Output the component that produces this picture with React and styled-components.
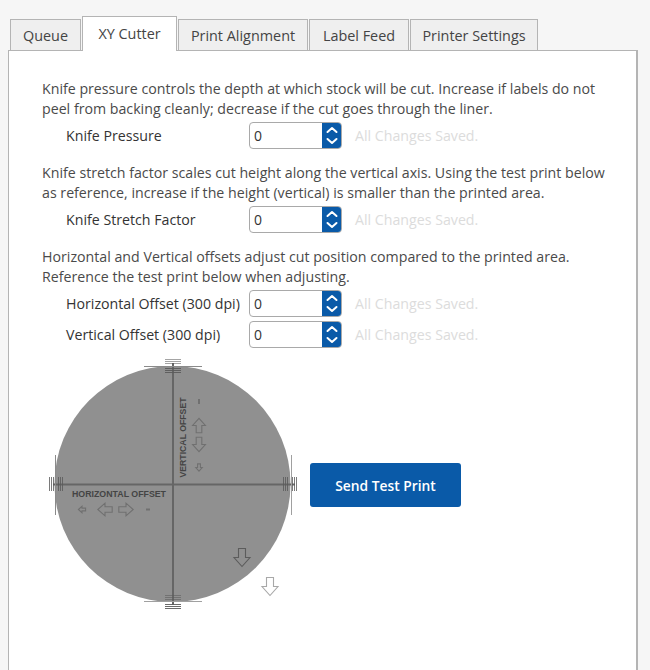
import React from "react";
import styled, { createGlobalStyle } from "styled-components";

const GlobalStyle = createGlobalStyle`
  html, body {
    margin: 0;
    height: 100%;
    background: #f6f6f6;
    overflow: hidden;
  }
  body {
    font-family: "Open Sans", "Noto Sans", sans-serif;
    color: #333;
  }
`;

const TABS = [
  { label: "Queue", width: 71 },
  { label: "XY Cutter", width: 95, active: true },
  { label: "Print Alignment", width: 130 },
  { label: "Label Feed", width: 100 },
  { label: "Printer Settings", width: 128 },
];

const Arrow = ({ x, y, rotate = 0, scale = 1, color = "#707070" }) => (
  <path
    d="M-3.5 -9 H3.5 V0 H8 L0 9 L-8 0 H-3.5 Z"
    transform={`translate(${x} ${y}) rotate(${rotate}) scale(${scale})`}
    fill="none"
    stroke={color}
    strokeWidth={1.1 / scale}
  />
);

// registration marks where the cross lines leave the circle
const Ticks = ({ x, y, vertical }) => {
  const offsets = [-7, -5, -3, 2, 4, 6];
  return offsets.map((o) =>
    vertical ? (
      <line key={o} x1={x - 8} x2={x + 8} y1={y + o + 0.5} y2={y + o + 0.5} stroke="#5a5a5a" strokeWidth="1" opacity={o < 0 ? 0.55 : 0.9} />
    ) : (
      <line key={o} x1={x + o + 0.5} x2={x + o + 0.5} y1={y - 7} y2={y + 7} stroke="#5a5a5a" strokeWidth="1" opacity="0.8" />
    )
  );
};

// test print preview, coordinates relative to the 260x260 drawing
const TestPrint = () => (
  <PrintSvg width="260" height="260" viewBox="0 0 260 260">
    <circle cx="127.5" cy="129" r="118" fill="#909090" />
    <line x1="128" x2="128" y1="8" y2="250" stroke="#666" strokeWidth="2" />
    <line x1="8" x2="250" y1="129.5" y2="129.5" stroke="#666" strokeWidth="2" />
    <line x1="99" x2="157" y1="11.5" y2="11.5" stroke="#8a8a8a" />
    <line x1="99" x2="157" y1="246.5" y2="246.5" stroke="#a0a0a0" />
    <line x1="10.5" x2="10.5" y1="100" y2="160" stroke="#8a8a8a" />
    <line x1="246.5" x2="246.5" y1="100" y2="160" stroke="#a0a0a0" />
    <Ticks x={128} y={11} vertical />
    <Ticks x={128} y={247} vertical />
    <Ticks x={11} y={129} />
    <Ticks x={245} y={129} />
    <PrintLabel x="27" y="141.5" textLength="94" lengthAdjust="spacingAndGlyphs">
      HORIZONTAL OFFSET
    </PrintLabel>
    <PrintLabel
      transform="translate(140.5 122.5) rotate(-90)"
      textLength="80"
      lengthAdjust="spacingAndGlyphs"
    >
      VERTICAL OFFSET
    </PrintLabel>
    <Arrow x={37} y={154.5} rotate={90} scale={0.4} />
    <Arrow x={60} y={154.5} rotate={90} scale={0.8} />
    <Arrow x={81} y={154.5} rotate={-90} scale={0.8} />
    <line x1="101" x2="105" y1="154.5" y2="154.5" stroke="#707070" strokeWidth="2" />
    <line x1="154" x2="154" y1="44" y2="49" stroke="#707070" strokeWidth="2" />
    <Arrow x={154} y={70.5} rotate={180} scale={0.8} />
    <Arrow x={154} y={89.5} scale={0.8} />
    <Arrow x={154} y={112.5} scale={0.4} />
    <Arrow x={197} y={202.5} color="#5c5c5c" />
    <Arrow x={225} y={231.5} color="#a8a8a8" />
  </PrintSvg>
);

const Spinner = () => (
  <SpinBox>
    <SpinValue>0</SpinValue>
    <SpinButtons>
      <svg width="20" height="27" viewBox="0 0 20 27" fill="none" stroke="#fff" strokeWidth="2" strokeLinecap="round" strokeLinejoin="round">
        <path d="M5.5 10 L10 6 L14.5 10" />
        <path d="M5.5 17 L10 21 L14.5 17" />
      </svg>
    </SpinButtons>
  </SpinBox>
);

const Setting = ({ label, gap = 14 }) => (
  <Row $gap={gap}>
    <RowLabel>{label}</RowLabel>
    <Spinner />
    <Saved>All Changes Saved.</Saved>
  </Row>
);

const App = () => {
  return (
    <Page>
      <GlobalStyle />
      <TabBar>
        {TABS.map((t) => (
          <Tab key={t.label} $active={t.active} $width={t.width}>
            {t.label}
          </Tab>
        ))}
      </TabBar>
      <Panel>
        <Help>
          Knife pressure controls the depth at which stock will be cut. Increase if labels do not
          <br />
          peel from backing cleanly; decrease if the cut goes through the liner.
        </Help>
        <Setting label="Knife Pressure" />
        <Help>
          Knife stretch factor scales cut height along the vertical axis. Using the test print below
          <br />
          as reference, increase if the height (vertical) is smaller than the printed area.
        </Help>
        <Setting label="Knife Stretch Factor" />
        <Help>
          Horizontal and Vertical offsets adjust cut position compared to the printed area.
          <br />
          Reference the test print below when adjusting.
        </Help>
        <Setting label="Horizontal Offset (300 dpi)" gap={1} />
        <Setting label="Vertical Offset (300 dpi)" gap={0} />
        <PrintArea>
          <TestPrint />
          <SendButton>Send Test Print</SendButton>
        </PrintArea>
      </Panel>
    </Page>
  );
};

const Page = styled.div`
  width: 650px;
  height: 670px;
  padding: 16px 12px 0 8px;
  box-sizing: border-box;
  display: flex;
  flex-direction: column;
`;

const TabBar = styled.div`
  display: flex;
  align-items: flex-end;
  gap: 1px;
  padding-left: 2px;
  height: 35px;
  margin-bottom: -1px;
  position: relative;
  z-index: 1;
`;

const Tab = styled.div`
  width: ${(p) => p.$width}px;
  height: ${(p) => (p.$active ? 35 : 32)}px;
  box-sizing: border-box;
  display: flex;
  justify-content: center;
  align-items: ${(p) => (p.$active ? "flex-start" : "center")};
  padding-top: ${(p) => (p.$active ? 7 : 1)}px;
  font-size: 14.4px;
  color: #444;
  background: ${(p) => (p.$active ? "#fff" : "#efefef")};
  border: 1px solid #b4b4b4;
  border-bottom: ${(p) => (p.$active ? "none" : "1px solid #b4b4b4")};
`;

const Panel = styled.div`
  flex: 1;
  background: #fff;
  border: 1px solid #b4b4b4;
  border-bottom: none;
  border-right-width: 2px;
  padding: 28px 20px 0 33px;
  display: flex;
  flex-direction: column;
`;

const Help = styled.p`
  margin: 0;
  font-size: 14.2px;
  line-height: 20px;
  color: #4a4a4a;
  white-space: nowrap;
`;

const Row = styled.div`
  display: flex;
  align-items: center;
  height: 27px;
  margin: 3px 0 ${(p) => p.$gap}px;
  padding-left: 24px;
`;

const RowLabel = styled.span`
  width: 183px;
  font-size: 14.2px;
  color: #333;
  white-space: nowrap;
`;

const SpinBox = styled.div`
  width: 93px;
  height: 27px;
  box-sizing: border-box;
  display: flex;
  justify-content: space-between;
  border: 1px solid #a9a9a9;
  border-radius: 4px;
  overflow: hidden;
`;

const SpinValue = styled.span`
  padding-left: 4px;
  font-size: 14px;
  line-height: 25px;
  color: #333;
`;

const SpinButtons = styled.span`
  width: 20px;
  margin: -1px;
  background: #0a5aa8;
  display: flex;
`;

const Saved = styled.span`
  margin-left: 13px;
  font-size: 14.2px;
  color: #dcdcdc;
  white-space: nowrap;
`;

const PrintArea = styled.div`
  display: flex;
  align-items: center;
  margin: 7px 0 0 -33px;
`;

const PrintSvg = styled.svg`
  display: block;
  flex: none;
  margin-left: 36px;
`;

const PrintLabel = styled.text`
  font-family: "Liberation Sans", sans-serif;
  font-size: 9.5px;
  font-weight: 700;
  fill: #444;
`;

const SendButton = styled.button`
  width: 151px;
  height: 44px;
  margin-left: 5px;
  background: #0a5aa8;
  color: #fff;
  border: none;
  border-radius: 3px;
  font-family: "Open Sans", sans-serif;
  font-size: 13.8px;
  font-weight: 600;
`;

export default App;
